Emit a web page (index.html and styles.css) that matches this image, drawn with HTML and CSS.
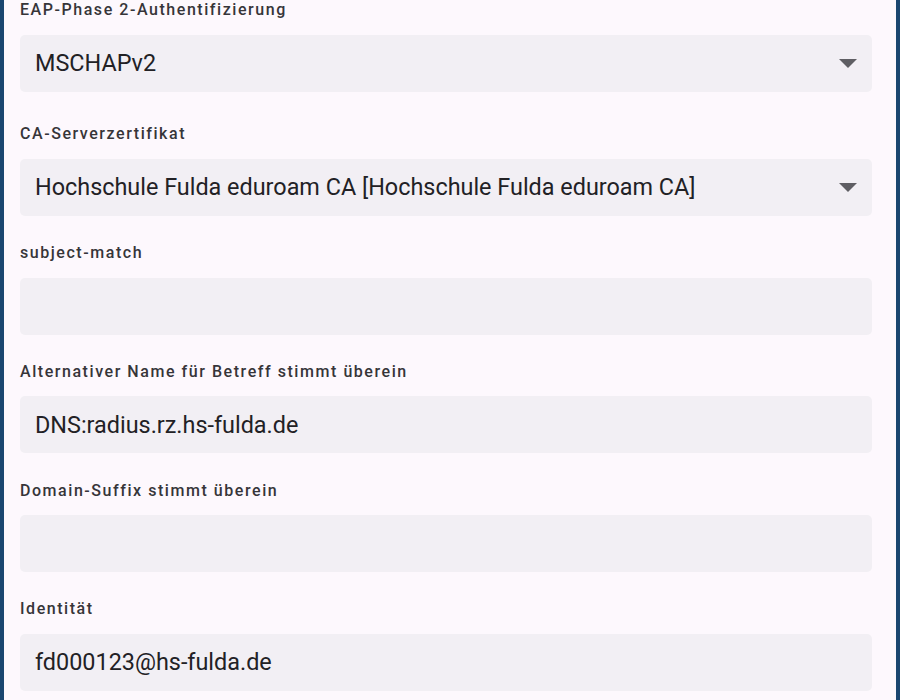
FILE: index.html
```html
<!DOCTYPE html>
<html lang="de">
<head>
<meta charset="utf-8">
<title>EAP</title>
<link rel="stylesheet" href="styles.css">
</head>
<body>
<div class="frame">
  <div class="form">
    <div class="group group-first">
      <div class="label">EAP-Phase 2-Authentifizierung</div>
      <div class="field">
        <span class="value">MSCHAPv2</span>
        <svg class="arrow" width="18" height="9" viewBox="0 0 18 9"><polygon points="0,0 18,0 9,9" fill="#5f5e63"/></svg>
      </div>
    </div>
    <div class="group">
      <div class="label">CA-Serverzertifikat</div>
      <div class="field">
        <span class="value">Hochschule Fulda eduroam CA [Hochschule Fulda eduroam CA]</span>
        <svg class="arrow" width="18" height="9" viewBox="0 0 18 9"><polygon points="0,0 18,0 9,9" fill="#5f5e63"/></svg>
      </div>
    </div>
    <div class="group">
      <div class="label">subject-match</div>
      <div class="field"><span class="value"></span></div>
    </div>
    <div class="group">
      <div class="label">Alternativer Name für Betreff stimmt überein</div>
      <div class="field"><span class="value">DNS:radius.rz.hs-fulda.de</span></div>
    </div>
    <div class="group">
      <div class="label">Domain-Suffix stimmt überein</div>
      <div class="field"><span class="value"></span></div>
    </div>
    <div class="group">
      <div class="label">Identität</div>
      <div class="field"><span class="value">fd000123@hs-fulda.de</span></div>
    </div>
  </div>
</div>
</body>
</html>
```
FILE: styles.css
```css
html, body {
  margin: 0;
  padding: 0;
  height: 100%;
}
body {
  background: #fdf8fd;
  font-family: Roboto, "Noto Sans", sans-serif;
  overflow: hidden;
}
.frame {
  box-sizing: border-box;
  height: 100%;
  border-left: 4px solid #1a4670;
  border-right: 4px solid #1a4670;
  padding: 0 24px 0 16px;
}
.form {
  display: flex;
  flex-direction: column;
}
.group {
  display: flex;
  flex-direction: column;
  margin-bottom: 27.3px;
}
.group-first {
  margin-bottom: 32.8px;
}
.label {
  font-size: 16px;
  font-weight: 500;
  line-height: 19px;
  letter-spacing: 1.55px;
  color: #363539;
}
.field {
  box-sizing: border-box;
  margin-top: 15.5px;
  height: 57px;
  background: #f2eff4;
  border-radius: 5px;
  display: flex;
  align-items: center;
  padding: 0 15px 0 15px;
}
.value {
  flex: 1;
  font-size: 23.4px;
  line-height: 28px;
  color: #222125;
  white-space: nowrap;
}
.arrow {
  flex: none;
  display: block;
}
```
